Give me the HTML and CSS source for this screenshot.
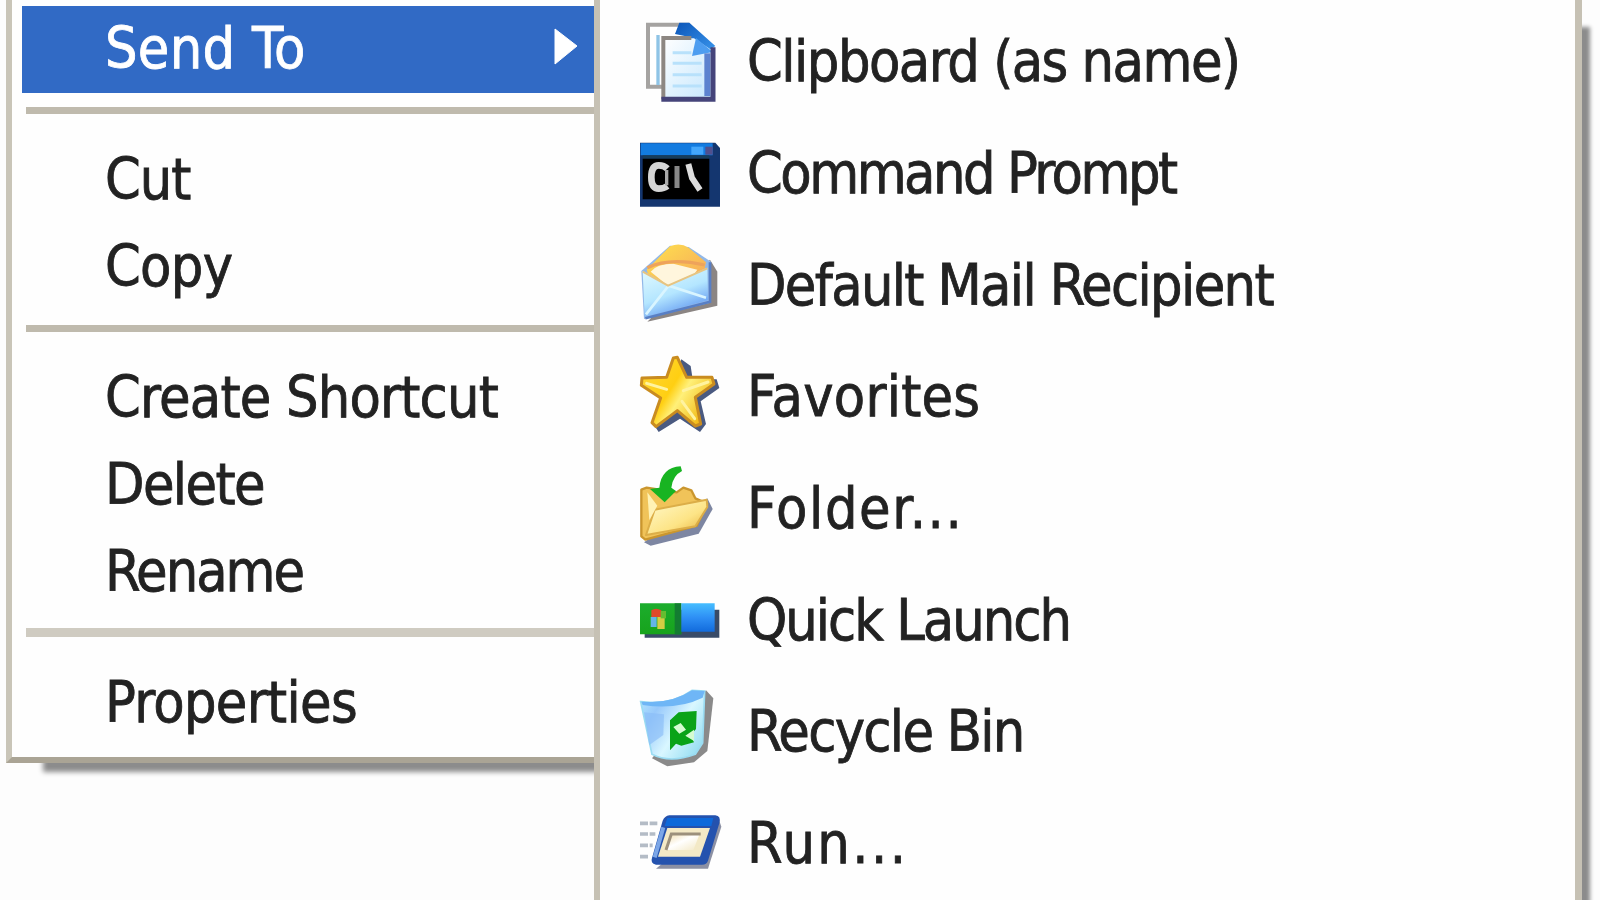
FILE: index.html
```html
<!DOCTYPE html>
<html lang="en">
<head>
    <meta charset="UTF-8">
    <meta name="viewport" content="width=device-width, initial-scale=1.0">
    <title>Send To</title>
    <link rel="stylesheet" href="styles.css">
</head>
<body>
    <div class="desktop">
        <!-- Context menu -->
        <div class="menu-column">
            <ul class="context-menu">
                <li class="item active">
                    <span class="label send-to">Send To</span>
                    <svg class="arrow" viewBox="0 0 26 38"><path d="M2 1 L24 18 L2 36 Z" fill="#fff" stroke="#fff"/></svg>
                </li>
                <li class="separator"></li>
                <li class="item"><span class="label cut">Cut</span></li>
                <li class="item"><span class="label copy">Copy</span></li>
                <li class="separator"></li>
                <li class="item"><span class="label shortcut">Create Shortcut</span></li>
                <li class="item"><span class="label delete">Delete</span></li>
                <li class="item"><span class="label rename">Rename</span></li>
                <li class="separator light"></li>
                <li class="item"><span class="label properties">Properties</span></li>
            </ul>
        </div>

        <!-- Send To submenu -->
        <ul class="submenu">
            <li class="entry">
                <svg class="icon" viewBox="45 24 270 270">
                    <defs>
                        <linearGradient id="page" x1="0" y1="0" x2="1" y2="1"><stop offset="0" stop-color="#fff"/><stop offset="1" stop-color="#c4e6fd"/></linearGradient>
                        <linearGradient id="fold" x1="0" y1="0" x2="1" y2="1"><stop offset="0" stop-color="#0b55b8"/><stop offset="1" stop-color="#3d9af0"/></linearGradient>
                    </defs>
                    <path d="M84 44 H205 L240 80 V230 H84 Z" fill="#fff" stroke="#a5a3a1" stroke-width="12"/>
                    <path d="M114 75 V225" stroke="#8fc4e6" stroke-width="10"/>
                    <path d="M165 72 L178 38 H208 L286 108 L240 138 L205 80 Z" fill="url(#fold)"/>
                    <path d="M130 85 H222 L280 124 V268 H130 Z" fill="url(#page)"/>
                    <path d="M216 138 L228 84 L278 126 Z" fill="#4d9df0"/>
                    <path d="M130 268 V84 H214" fill="none" stroke="#8d8782" stroke-width="12"/>
                    <path d="M262 130 V258" stroke="#5c82cf" stroke-width="18"/>
                    <path d="M124 268 H279 V112" fill="none" stroke="#45447a" stroke-width="15"/>
                    <path d="M158 128 H214 M158 160 H245 M158 194 H245 M158 228 H245" stroke="#b8e1fb" stroke-width="9"/>
                </svg>
                <span class="label clipboard">Clipboard (as name)</span>
            </li>
            <li class="entry">
                <svg class="icon" viewBox="45 0 270 270">
                    <path d="M60 38 H286 L300 54 V230 H60 Z" fill="#14366f"/>
                    <path d="M62 40 H278 V76 H62 Z" fill="#137be0"/>
                    <path d="M214 50 H250 V74 H214 Z" fill="#43a6fb"/>
                    <path d="M256 50 H278 V74 H256 Z" fill="#514f8c"/>
                    <path d="M68 76 H268 V86 H68 Z" fill="#173d5b"/>
                    <path d="M68 86 H268 V208 H68 Z" fill="#000"/>
                    <path d="M142 116 Q132 106 116 106 Q94 106 94 142 Q94 176 116 176 Q132 176 142 168" fill="none" stroke="#d6d6d6" stroke-width="20"/>
                    <path d="M140 120 V166" stroke="#aaa" stroke-width="10"/>
                    <path d="M171 108 V174" stroke="#888" stroke-width="15"/>
                    <path d="M205 102 L216 144 L240 180" fill="none" stroke="#ddd" stroke-width="18"/>
                </svg>
                <span class="label prompt">Command Prompt</span>
            </li>
            <li class="entry">
                <svg class="icon" viewBox="45 20 270 270">
                    <defs>
                        <linearGradient id="flap" x1="0" y1="0" x2="1" y2="1"><stop offset="0" stop-color="#ffe34d"/><stop offset="1" stop-color="#f5a55c"/></linearGradient>
                        <linearGradient id="mail" x1="0" y1="0" x2=".5" y2="1"><stop offset="0" stop-color="#e4fbff"/><stop offset=".6" stop-color="#b4e6ff"/><stop offset="1" stop-color="#669df2"/></linearGradient>
                    </defs>
                    <path d="M82 262 L292 214 V112 L270 76 Z" fill="#8b8583"/>
                    <path d="M64 110 L150 34 L206 38 L273 82 L268 206 L72 254 Z" fill="#92b8e8"/>
                    <path d="M80 106 L150 36 Q180 24 206 40 L258 84 L252 112 L146 154 L84 118 Z" fill="url(#flap)"/>
                    <path d="M92 112 Q110 88 160 88 L232 106 L210 136 L144 154 Z" fill="#fff6dd"/>
                    <path d="M82 100 Q150 68 254 92" fill="none" stroke="#eea35b" stroke-width="10"/>
                    <path d="M68 110 L144 152 L262 100 L264 198 L74 248 Z" fill="url(#mail)"/>
                    <path d="M78 240 L146 154 L258 190" fill="none" stroke="#d9f5ff" stroke-width="8"/>
                    <path d="M68 112 L144 154 L262 102" fill="none" stroke="#e7c481" stroke-width="6"/>
                    <path d="M270 84 L270 202 L76 252" fill="none" stroke="#587fc5" stroke-width="8"/>
                </svg>
                <span class="label mail">Default Mail Recipient</span>
            </li>
            <li class="entry">
                <svg class="icon" viewBox="45 25 270 270">
                    <defs>
                        <linearGradient id="star" x1="0" y1="0" x2="1" y2=".6"><stop offset="0" stop-color="#ffd83c"/><stop offset=".5" stop-color="#ffcf12"/><stop offset=".65" stop-color="#fff079"/><stop offset="1" stop-color="#f2ba16"/></linearGradient>
                    </defs>
                    <path d="M184 44 L212 64 L218 104 L290 104 L298 130 L242 170 L258 238 L240 262 L180 222 L116 262 L104 244 Z" fill="#4a5a80"/>
                    <path d="M172 38 L200 98 L276 98 L282 118 L226 158 L242 238 L226 244 L172 198 L108 246 L96 234 L122 160 L64 122 L66 100 L140 98 L160 40 Z" fill="url(#star)" stroke="#c98c20" stroke-width="9" stroke-linejoin="round"/>
                    <path d="M80 116 L140 134 M190 138 L264 112 M186 170 L224 222" stroke="#fff3a0" stroke-width="9" stroke-linecap="round"/>
                </svg>
                <span class="label favorites">Favorites</span>
            </li>
            <li class="entry">
                <svg class="icon" viewBox="45 30 270 270">
                    <defs>
                        <linearGradient id="folder" x1="0" y1="0" x2="1" y2="1"><stop offset="0" stop-color="#fffbd0"/><stop offset=".6" stop-color="#fde486"/><stop offset="1" stop-color="#e6ae35"/></linearGradient>
                    </defs>
                    <path d="M72 262 L92 272 L236 236 L278 162 L262 130 Z" fill="#7d86a2"/>
                    <path d="M64 104 L80 98 L170 112 L190 98 L214 106 L226 130 L262 146 L230 212 L76 254 L64 244 Z" fill="#f0c359" stroke="#ca962e" stroke-width="7" stroke-linejoin="round"/>
                    <path d="M78 240 L104 164 L260 134 L262 156 L226 214 Z" fill="url(#folder)" stroke="#dcae48" stroke-width="6" stroke-linejoin="round"/>
                    <path d="M82 112 L112 152 L88 196 Z" fill="#fff2b4"/>
                    <path d="M182 34 L186 48 Q158 62 154 98 L168 108 L134 142 L90 102 L118 98 Q124 38 182 34 Z" fill="#18b422"/>
                </svg>
                <span class="label folder">Folder...</span>
            </li>
            <li class="entry">
                <svg class="icon" viewBox="45 -25 270 270">
                    <defs>
                        <linearGradient id="bar" x1="0" y1="0" x2="0" y2="1"><stop offset="0" stop-color="#45bdff"/><stop offset=".5" stop-color="#2e8ff5"/><stop offset="1" stop-color="#126bdc"/></linearGradient>
                        <linearGradient id="start" x1="0" y1="0" x2="0" y2="1"><stop offset="0" stop-color="#1cad2d"/><stop offset="1" stop-color="#17a31c"/></linearGradient>
                    </defs>
                    <path d="M74 76 H298 V160 H74 Z" fill="#394b68"/>
                    <path d="M60 57 H184 V150 H60 Z" fill="url(#start)"/>
                    <path d="M164 57 H184 V150 H164 Z" fill="#137c31"/>
                    <path d="M184 57 H284 V142 H184 Z" fill="url(#bar)"/>
                    <path d="M94 78 Q108 68 124 78 V98 H94 Z" fill="#e0492a"/>
                    <path d="M92 98 H110 V128 H92 Z" fill="#64b5e8"/>
                    <path d="M112 98 H134 V134 H112 Z" fill="#d3cd43"/>
                    <path d="M122 80 H138 V102 H122 Z" fill="#67bd31"/>
                </svg>
                <span class="label launch">Quick Launch</span>
            </li>
            <li class="entry">
                <svg class="icon" viewBox="45 25 270 270">
                    <defs>
                        <linearGradient id="bin" x1="0" y1="0" x2="1" y2=".7"><stop offset="0" stop-color="#b5eaff"/><stop offset=".3" stop-color="#98c9fb"/><stop offset=".65" stop-color="#d9f7ff"/><stop offset="1" stop-color="#9ce0f3"/></linearGradient>
                    </defs>
                    <path d="M96 236 L142 260 L222 248 L262 214 L280 56 L258 32 Z" fill="#8a8a8a"/>
                    <path d="M62 66 Q152 78 216 32 L254 34 L248 190 L226 224 Q150 252 96 224 Z" fill="url(#bin)" stroke="#9bdcf2" stroke-width="5"/>
                    <path d="M64 66 Q152 74 216 32 L254 34 L248 54 Q170 92 68 76 Z" fill="#6fb6f6"/>
                    <path d="M72 98 L88 196 L130 166 L132 104 Z" fill="#8abdf8" opacity=".65"/>
                    <path d="M150 212 V122 L176 98 L230 94 L228 148 L212 166 L222 188 L184 198 L168 192 Z" fill="#0aa318"/>
                    <path d="M160 142 L182 130 L198 150 L178 162 Z M196 168 L222 150 V184 Z" fill="#d5fbd1"/>
                </svg>
                <span class="label recycle">Recycle Bin</span>
            </li>
            <li class="entry">
                <svg class="icon" viewBox="45 0 270 270">
                    <defs>
                        <linearGradient id="win" x1="0" y1="0" x2="1" y2="1"><stop offset="0" stop-color="#f2dfb1"/><stop offset=".45" stop-color="#fff"/><stop offset="1" stop-color="#f3e8c4"/></linearGradient>
                    </defs>
                    <path d="M108 206 H264 L304 80 L294 50 Z" fill="#8c90a3"/>
                    <path d="M148 46 H286 Q304 48 298 70 L264 182 Q260 194 246 194 H108 Q90 190 96 174 L128 62 Q134 48 148 46 Z" fill="#2452ae"/>
                    <path d="M142 54 H280 L274 78 H134 Z" fill="#0d69da"/>
                    <path d="M130 82 L104 172" stroke="#7ba6e7" stroke-width="12"/>
                    <path d="M142 84 H270 L240 170 H114 Z" fill="#f3e9c6"/>
                    <path d="M156 104 H238 L220 150 H140 Z" fill="url(#win)"/>
                    <path d="M138 150 L154 102 H242" fill="none" stroke="#9c907c" stroke-width="9"/>
                    <path d="M60 70 H112 M60 102 H106 M60 136 H98 M60 170 H88" stroke="#b4bcc6" stroke-width="11" stroke-dasharray="24 5"/>
                </svg>
                <span class="label run">Run...</span>
            </li>
        </ul>
    </div>
</body>
</html>
```
FILE: styles.css
```css
* {
    box-sizing: border-box;
}

body {
    margin: 0;
    background-color: #fdfdfd;
    color: #222;
    font-family: "DejaVu Sans Condensed", "DejaVu Sans", sans-serif;
    font-stretch: condensed;
    font-size: 57px;
    overflow: hidden;
}

ul {
    list-style: none;
    margin: 0;
    padding: 0;
}

.desktop {
    display: flex;
    width: 1600px;
    height: 900px;
    overflow: hidden;
}

/* Context menu */
.menu-column {
    width: 594px;
    padding-left: 6px;
    overflow: hidden;
    flex-shrink: 0;
}

.context-menu {
    height: 763px;
    padding: 6px 0 0 10px;
    background: #fefefe;
    border-left: 6px solid #c9c5b8;
    border-bottom: 6px solid #aaa495;
    box-shadow: 36px 10px 5px -1px #8c8c8c;
}

.item {
    display: flex;
    align-items: center;
    height: 87px;
    padding-left: 83px;
}

.label {
    white-space: nowrap;
    line-height: 80px;
    padding-bottom: 3px;
    -webkit-text-stroke: 0.8px currentColor;
}

.active {
    background-color: #316ac5;
    color: #fff;
}

.arrow {
    width: 26px;
    height: 38px;
    margin: 0 15px 6px auto;
}

.separator {
    height: 44px;
    padding: 14px 0 0 4px;
}

.separator::before {
    content: "";
    display: block;
    height: 7px;
    background-color: #bfbaad;
}

.separator.light {
    padding-top: 12px;
}

.separator.light::before {
    height: 9px;
    background-color: #cfcbc1;
}

/* Submenu */
.submenu {
    width: 988px;
    height: 900px;
    padding: 7px 0 0 35px;
    background: #fefefe;
    border-left: 6px solid #c6c1b4;
    border-right: 7px solid #c6c1b4;
    box-shadow: 9px 26px 4px -1px #8c8c8c;
}

.entry {
    display: flex;
    align-items: center;
    gap: 22px;
    height: 111.7px;
}

.icon {
    width: 90px;
    height: 90px;
    flex-shrink: 0;
}

/* Letter spacing of each label */
.send-to { letter-spacing: 0.3px; }
.cut { letter-spacing: -1px; }
.copy { letter-spacing: -0.7px; }
.shortcut { letter-spacing: -0.8px; }
.delete { letter-spacing: -1.6px; }
.rename { letter-spacing: -2px; }
.properties { letter-spacing: -0.7px; }
.clipboard { letter-spacing: -1.5px; }
.prompt { letter-spacing: -2.5px; }
.mail { letter-spacing: -1.65px; }
.favorites { letter-spacing: 0.25px; }
.folder { letter-spacing: 1.6px; }
.launch { letter-spacing: -2px; }
.recycle { letter-spacing: -1.7px; }
.run { letter-spacing: 2.4px; }
```
